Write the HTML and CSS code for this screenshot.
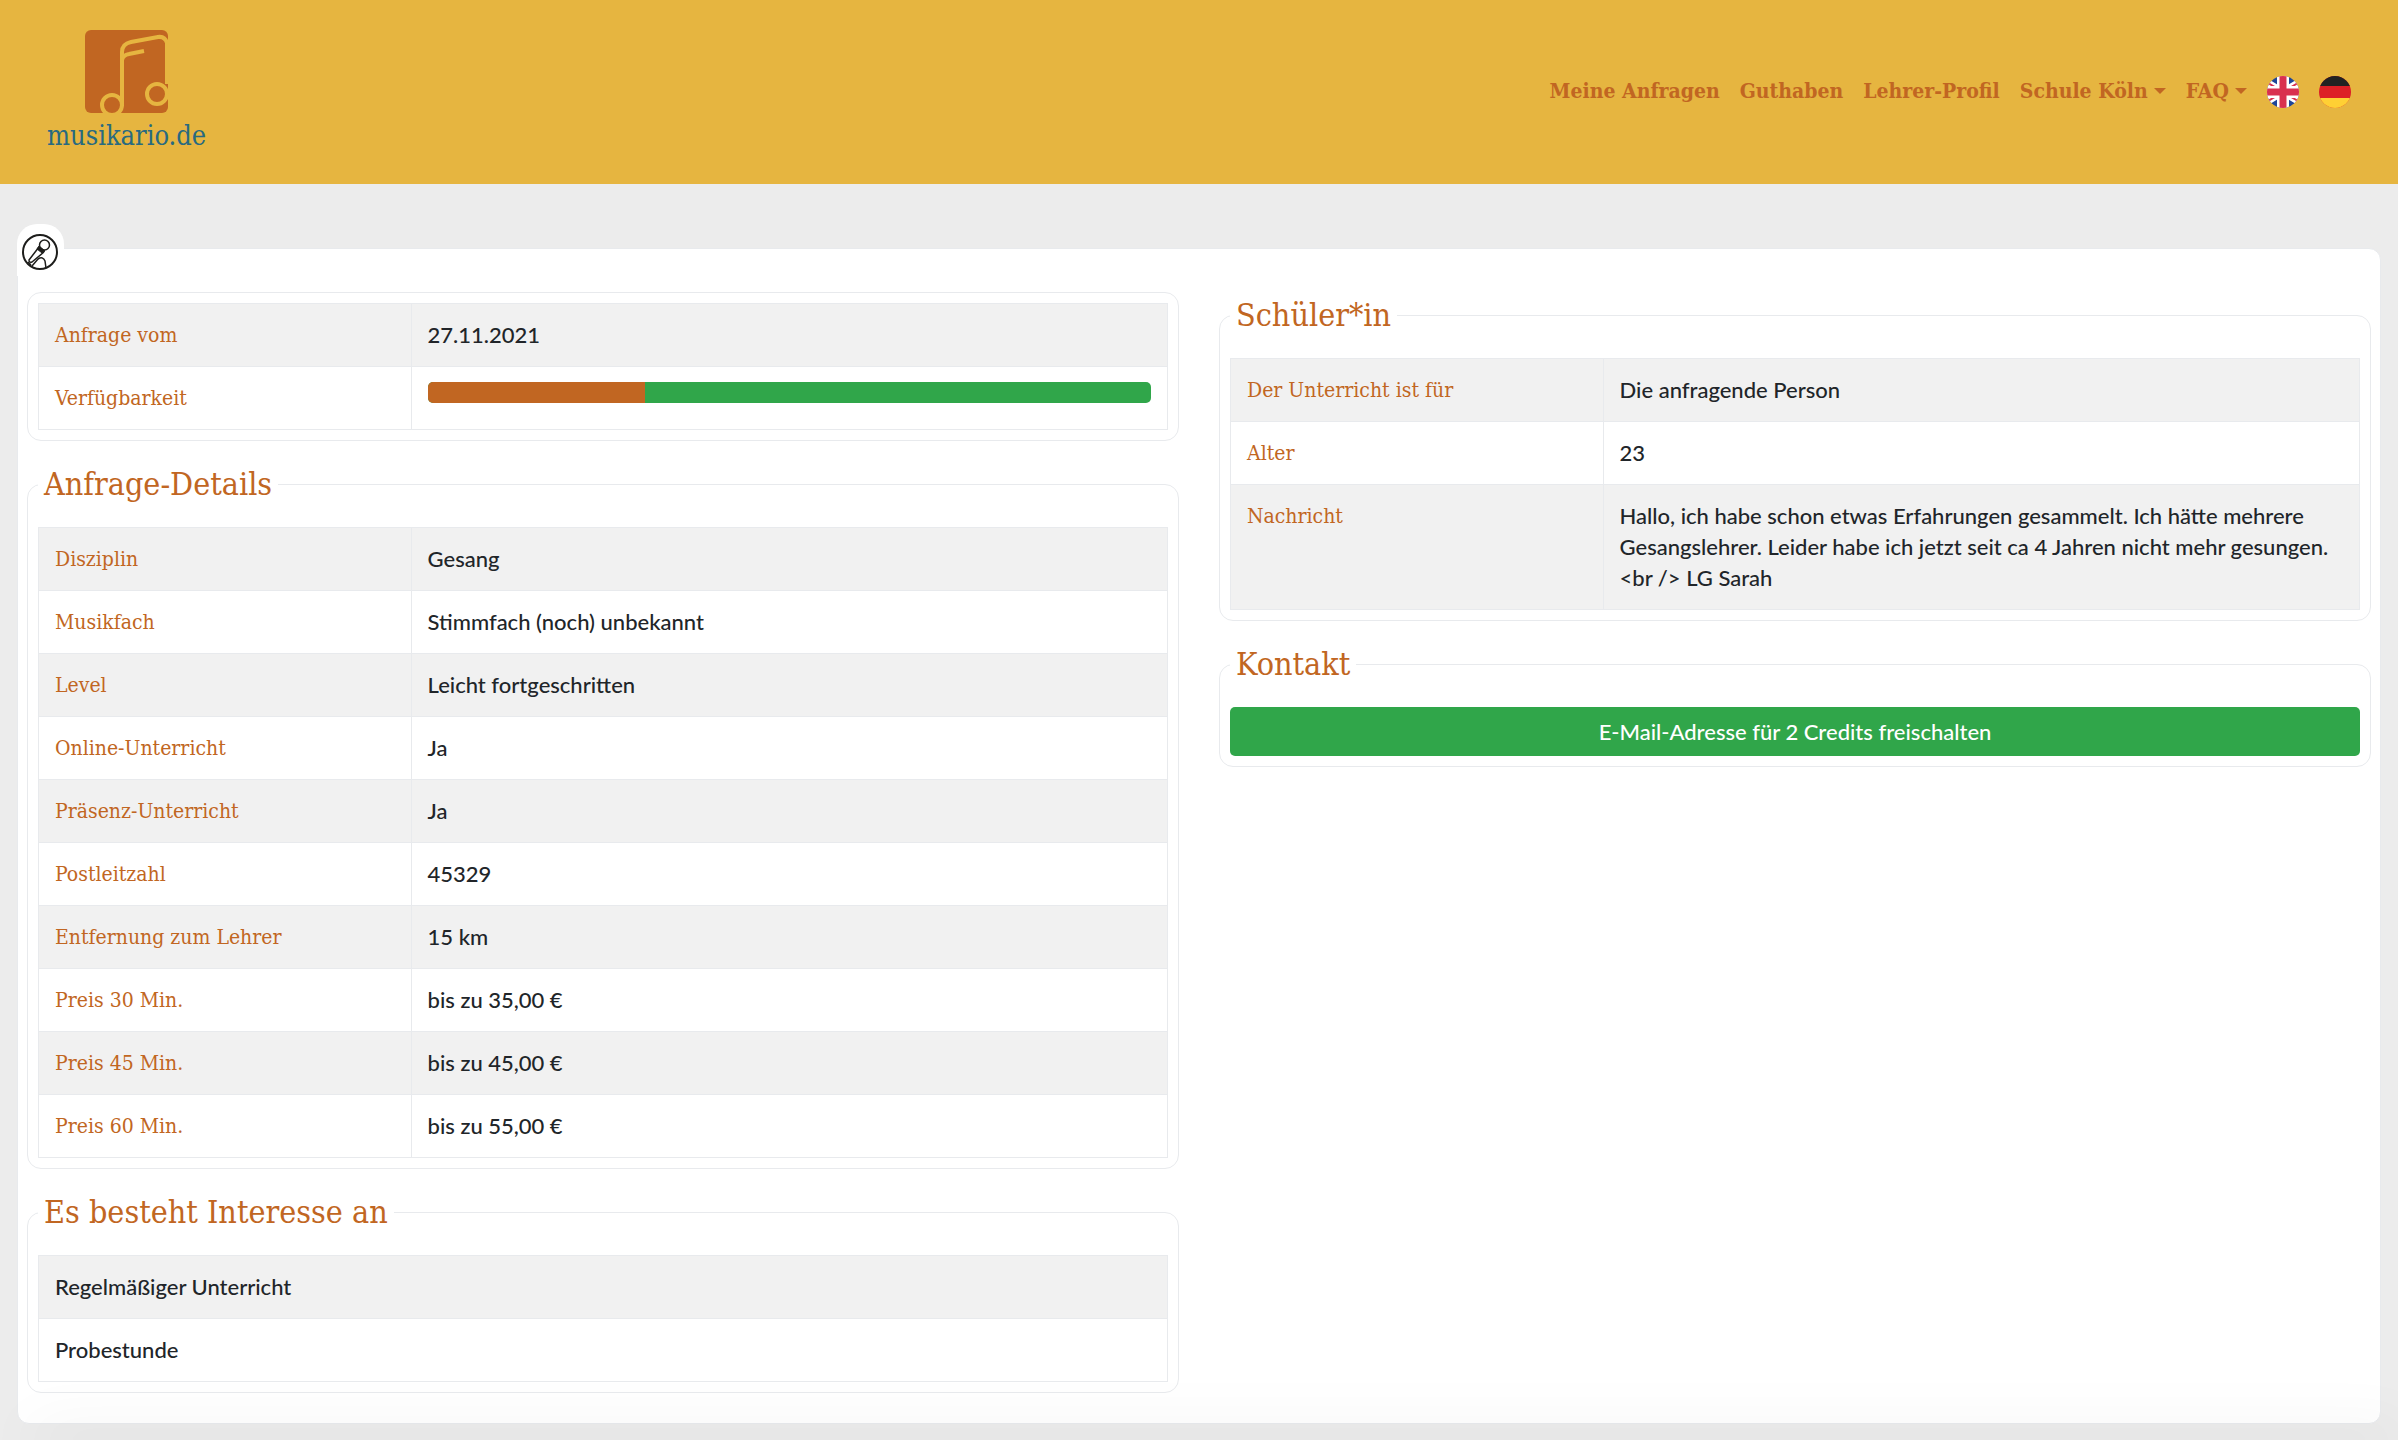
FILE: index.html
```html
<!DOCTYPE html>
<html lang="de">
<head>
<meta charset="utf-8">
<title>musikario.de</title>
<link rel="stylesheet" href="styles.css">
</head>
<body>
<header class="navbar">
  <a class="brand" href="#">
    <svg class="brand-mark" viewBox="0 0 84 84" aria-hidden="true">
      <rect width="83" height="83" rx="6" fill="#c16622"/>
      <g fill="none" stroke="#e6b540" stroke-width="4">
        <path d="M37 76V22Q37 14 46 12L73 7Q80 6 82 13V54"/>
        <path d="M37 30Q38 25 44 24L59 21"/>
        <circle cx="27" cy="75" r="10"/>
        <circle cx="72" cy="64" r="10"/>
      </g>
      <path d="M81 12h3v42h-3zM17 83h21v1H17z" fill="#e6b540"/>
    </svg>
    <span class="brand-name">musikario.de</span>
  </a>
  <nav class="menu">
    <a class="menu-link" href="#">Meine Anfragen</a>
    <a class="menu-link" href="#">Guthaben</a>
    <a class="menu-link" href="#">Lehrer-Profil</a>
    <a class="menu-link has-menu" href="#">Schule Köln</a>
    <a class="menu-link has-menu" href="#">FAQ</a>
    <a class="menu-flag" href="#" aria-label="English">
      <svg viewBox="0 0 32 32" aria-hidden="true">
        <clipPath id="round"><circle cx="16" cy="16" r="16"/></clipPath>
        <g clip-path="url(#round)">
          <rect width="32" height="32" fill="#1f4698"/>
          <path d="M-4 4L36 28M-4 28L36 4" stroke="#fff" stroke-width="7"/>
          <path d="M-4 4L36 28M-4 28L36 4" stroke="#d9304f" stroke-width="2"/>
          <path d="M16 0V32M0 16H32" stroke="#fff" stroke-width="12"/>
          <path d="M16 0V32M0 16H32" stroke="#d9304f" stroke-width="7"/>
        </g>
      </svg>
    </a>
    <a class="menu-flag" href="#" aria-label="Deutsch">
      <svg viewBox="0 0 32 32" aria-hidden="true">
        <g clip-path="url(#round)">
          <rect width="32" height="32" fill="#dd1f26"/>
          <rect width="32" height="10" fill="#222"/>
          <rect y="22" width="32" height="10" fill="#ffd034"/>
        </g>
      </svg>
    </a>
  </nav>
</header>

<main class="card">
  <span class="badge">
    <svg viewBox="0 0 36 36" role="img" aria-label="Gesang">
      <g fill="none" stroke="#1d1d1b" stroke-linejoin="round">
        <circle cx="18" cy="18" r="17" stroke-width="2"/>
        <circle cx="22.500" cy="11" r="5" stroke-width="1.500"/>
        <path d="M17 13L7 26Q7 29 10 28L22 18" stroke-width="1.500"/>
        <path d="M10 32L16 25Q21 22 23 27L24 34M6 28L9 31" stroke-width="1.500"/>
        <path d="M17 12L23 17L20 19L15 15Z" fill="#1d1d1b"/>
      </g>
    </svg>
  </span>

  <div class="columns">
    <div class="column">
      <section class="group">
        <table class="data">
          <tr><th scope="row">Anfrage vom</th><td>27.11.2021</td></tr>
          <tr><th scope="row">Verfügbarkeit</th><td><div class="progress"><div class="progress-taken" style="width: 30%"></div></div></td></tr>
        </table>
      </section>

      <fieldset class="group">
        <legend>Anfrage-Details</legend>
        <table class="data">
          <tr><th scope="row">Disziplin</th><td>Gesang</td></tr>
          <tr><th scope="row">Musikfach</th><td>Stimmfach (noch) unbekannt</td></tr>
          <tr><th scope="row">Level</th><td>Leicht fortgeschritten</td></tr>
          <tr><th scope="row">Online-Unterricht</th><td>Ja</td></tr>
          <tr><th scope="row">Präsenz-Unterricht</th><td>Ja</td></tr>
          <tr><th scope="row">Postleitzahl</th><td>45329</td></tr>
          <tr><th scope="row">Entfernung zum Lehrer</th><td>15 km</td></tr>
          <tr><th scope="row">Preis 30 Min.</th><td>bis zu 35,00 €</td></tr>
          <tr><th scope="row">Preis 45 Min.</th><td>bis zu 45,00 €</td></tr>
          <tr><th scope="row">Preis 60 Min.</th><td>bis zu 55,00 €</td></tr>
        </table>
      </fieldset>

      <fieldset class="group">
        <legend>Es besteht Interesse an</legend>
        <table class="data">
          <tr><td>Regelmäßiger Unterricht</td></tr>
          <tr><td>Probestunde</td></tr>
        </table>
      </fieldset>
    </div>

    <div class="column">
      <fieldset class="group">
        <legend>Schüler*in</legend>
        <table class="data">
          <tr><th scope="row">Der Unterricht ist für</th><td>Die anfragende Person</td></tr>
          <tr><th scope="row">Alter</th><td>23</td></tr>
          <tr><th scope="row">Nachricht</th><td>Hallo, ich habe schon etwas Erfahrungen gesammelt. Ich hätte mehrere Gesangslehrer. Leider habe ich jetzt seit ca 4 Jahren nicht mehr gesungen. &lt;br /&gt; LG Sarah</td></tr>
        </table>
      </fieldset>

      <fieldset class="group">
        <legend>Kontakt</legend>
        <button class="unlock" type="button">E-Mail-Adresse für 2 Credits freischalten</button>
      </fieldset>
    </div>
  </div>
</main>
</body>
</html>
```
FILE: styles.css
```css
:root {
  --accent: #c16622;
  --green: #30a64a;
  --line: #e8eaed;
  --slab: "DejaVu Serif Condensed", "DejaVu Serif", serif;
  --sans: Lato, "Open Sans", sans-serif;
}

* { box-sizing: border-box; }

body {
  margin: 0;
  min-height: 100vh;
  background: #ececec;
  color: #212529;
  font: 500 22px/31px var(--sans);
}

/* soft shade along the lower edge of the window */
body::after {
  content: "";
  position: fixed;
  right: 0;
  bottom: 0;
  left: 40px;
  box-shadow: 0 0 60px 10px rgba(0, 0, 0, .08);
  pointer-events: none;
}

.navbar {
  display: flex;
  justify-content: space-between;
  align-items: center;
  height: 184px;
  padding: 0 47px;
  background: #e6b540;
}

.brand {
  display: flex;
  flex-direction: column;
  align-items: center;
  color: #286a80;
  text-decoration: none;
}
.brand-mark { width: 84px; height: 84px; }
.brand-name {
  padding-top: 4px;
  font: 27px/36px var(--slab);
}

.menu {
  display: flex;
  align-items: center;
  gap: 20px;
}
.menu-link {
  display: flex;
  align-items: center;
  gap: 6px;
  padding-bottom: 3px;
  color: var(--accent);
  font: bold 21px/31px var(--slab);
  text-decoration: none;
}
.has-menu::after {
  content: "";
  border: 6px solid transparent;
  border-top-color: var(--accent);
  border-bottom: 0;
}
.menu-flag { display: flex; }
.menu-flag svg { width: 32px; height: 32px; }

.card {
  position: relative;
  margin: 64px 17px 16px;
  padding: 43px 9px 30px;
  border: 1px solid var(--line);
  border-radius: 12px;
  background: #fff;
}

.badge {
  position: absolute;
  top: -25px;
  left: -1px;
  display: flex;
  padding: 10px 6px 6px 5px;
  border-radius: 20px 20px 0 0;
  background: #fff;
}
.badge svg { width: 36px; height: 36px; }

.columns {
  display: grid;
  grid-template-columns: 1fr 1fr;
  gap: 40px;
}
.column {
  display: flex;
  flex-direction: column;
  gap: 20px;
  min-width: 0;
}

.group {
  min-width: 0;
  margin: 0;
  padding: 10px;
  border: 1px solid var(--line);
  border-radius: 14px;
}
.group legend {
  margin-bottom: 10px;
  padding: 0 6px;
  color: var(--accent);
  font: 32px/46px var(--slab);
}

.data {
  width: 100%;
  border-collapse: collapse;
  table-layout: fixed;
}
.data th,
.data td {
  padding: 15px 16px 16px;
  border: 1px solid var(--line);
  text-align: left;
  vertical-align: top;
}
.data th {
  width: 33%;
  padding: 16px 16px 15px;
  color: var(--accent);
  font: 21px/31px var(--slab);
}
.data tr:nth-child(odd) { background: #f1f1f1; }

.progress {
  height: 21px;
  border-radius: 5px;
  background: var(--green);
  overflow: hidden;
}
.progress-taken {
  height: 100%;
  background: var(--accent);
}

.unlock {
  display: block;
  width: 100%;
  padding: 9px 16px;
  border: 0;
  border-radius: 5px;
  background: var(--green);
  color: #fff;
  font: 500 22px/31px var(--sans);
}
```
